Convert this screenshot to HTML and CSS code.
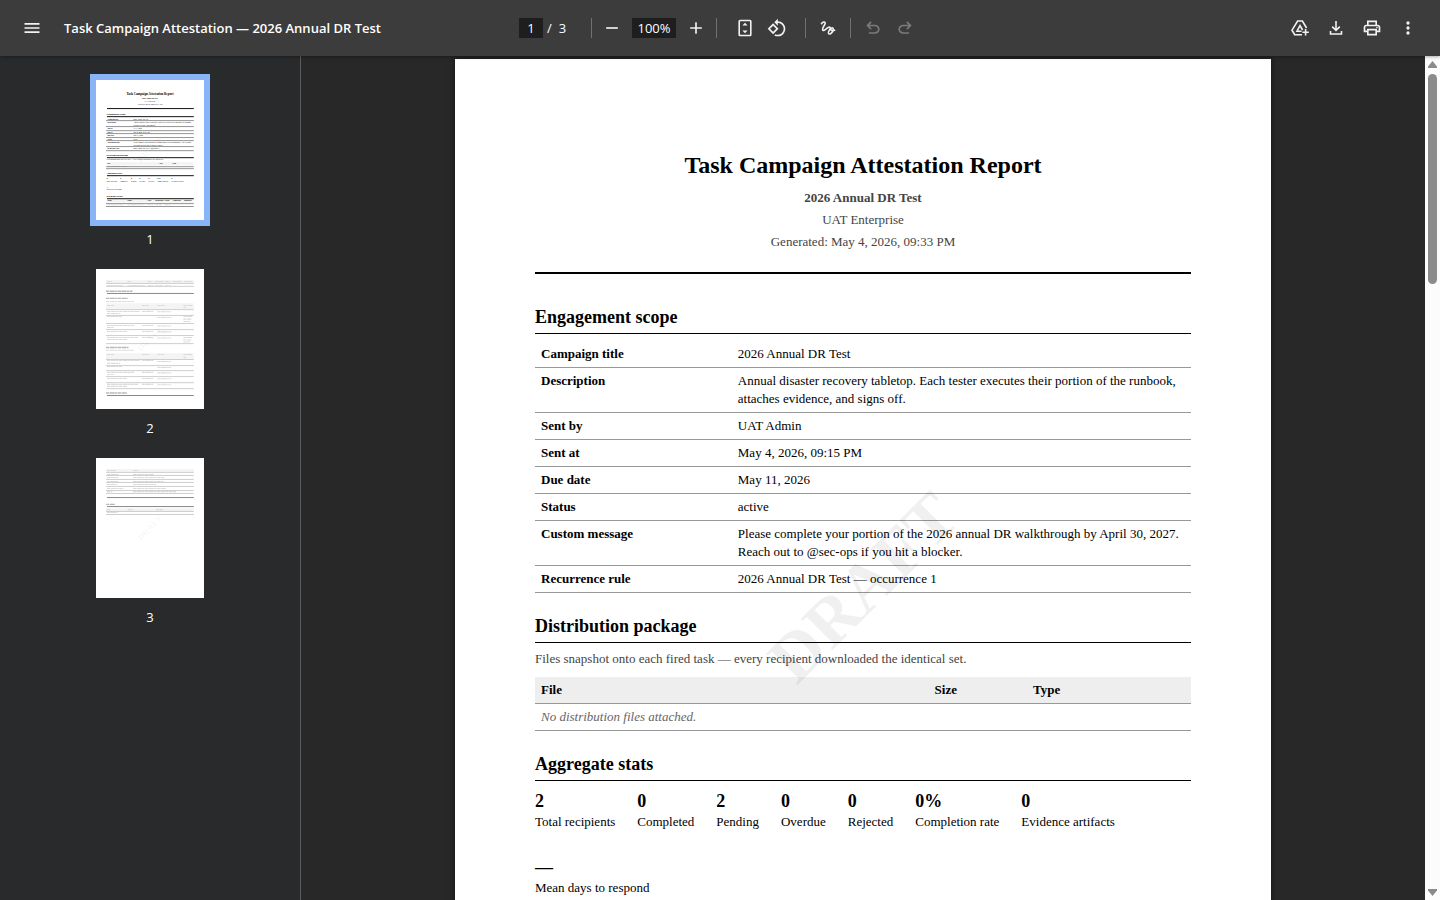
FILE: index.html
```html
<!DOCTYPE html>
<html lang="en">
<head>
    <meta charset="UTF-8">
    <meta name="viewport" content="width=device-width, initial-scale=1.0">
    <title>Task Campaign Attestation — 2026 Annual DR Test</title>
    <link rel="stylesheet" href="styles.css">
</head>
<body>

    <header class="toolbar">
        <div class="toolbar-start">
            <button type="button" class="icon-btn" aria-label="Menu">
                <svg viewBox="0 0 24 24"><path d="M3 18h18v-2H3v2zm0-5h18v-2H3v2zm0-7v2h18V6H3z"/></svg>
            </button>
            <h1 class="file-title">Task Campaign Attestation — 2026 Annual DR Test</h1>
        </div>

        <div class="toolbar-center">
            <input type="text" class="page-input" value="1" aria-label="Page number">
            <span class="page-total"><span>/</span><span>3</span></span>
            <span class="divider"></span>
            <div class="zoom-group">
                <button type="button" class="icon-btn" aria-label="Zoom out">
                    <svg viewBox="0 0 24 24"><path d="M19 13H5v-2h14v2z"/></svg>
                </button>
                <input type="text" class="zoom-input" value="100%" aria-label="Zoom level">
                <button type="button" class="icon-btn" aria-label="Zoom in">
                    <svg viewBox="0 0 24 24"><path d="M19 13h-6v6h-2v-6H5v-2h6V5h2v6h6v2z"/></svg>
                </button>
            </div>
            <span class="divider"></span>
            <div class="view-group">
                <button type="button" class="icon-btn" aria-label="Fit to page">
                    <svg viewBox="0 0 20 20"><path class="line" d="M5 2.5h10a.8.8 0 0 1 .8.8v13.4a.8.8 0 0 1-.8.8H5a.8.8 0 0 1-.8-.8V3.3a.8.8 0 0 1 .8-.8z"/><path d="M10 4.8l2.6 2.8H7.4zM10 15.2l2.6-2.8H7.4z"/></svg>
                </button>
                <button type="button" class="icon-btn" aria-label="Rotate counterclockwise">
                    <svg viewBox="0 0 24 24"><path d="M7.34 6.41L.86 12.9l6.49 6.48 6.49-6.48-6.5-6.49zM3.69 12.9l3.66-3.66L11 12.9l-3.66 3.66-3.65-3.66zm15.67-6.26C17.61 4.88 15.3 4 13 4V.76L8.76 5 13 9.24V6c1.79 0 3.58.68 4.95 2.05 2.73 2.73 2.73 7.17 0 9.9C16.58 19.32 14.79 20 13 20c-.97 0-1.94-.21-2.84-.61l-1.49 1.49C10.02 21.62 11.51 22 13 22c2.3 0 4.61-.88 6.36-2.64 3.52-3.51 3.52-9.21 0-12.72z"/></svg>
                </button>
            </div>
            <span class="divider"></span>
            <div class="edit-group">
                <button type="button" class="icon-btn" aria-label="Draw">
                    <svg viewBox="0 0 20 20"><path class="line" d="M3.2 6.2C4.600 4 7 3.200 7.200 5c.2 1.900-3.500 4.800-2.600 6.800 1.300 2.600 5.200-3.800 7.200-2.600 1.900 1.200-2.600 4.300-1.300 6.300 1.300 1.700 4.700-1.400 4.700-4.300 0-2.200-2.300-1.900-2.300.2 0 1.500 1.800 1.400 4.300.6"/></svg>
                </button>
            </div>
            <span class="divider"></span>
            <div class="edit-group">
                <button type="button" class="icon-btn" aria-label="Undo" disabled>
                    <svg viewBox="0 0 24 24"><path d="M7 19v-2h7.1q1.575 0 2.738-1T18 13.5t-1.162-2.5-2.738-1H7.800l2.600 2.600L9 14 4 9l5-5 1.400 1.400L7.800 8h6.300q2.425 0 4.163 1.575T20 13.500t-1.737 3.925T14.100 19z"/></svg>
                </button>
                <button type="button" class="icon-btn" aria-label="Redo" disabled>
                    <svg viewBox="0 0 24 24"><path d="M17 19v-2H9.900q-1.575 0-2.738-1T6 13.500 7.162 11 9.900 10h6.300l-2.600 2.600L15 14l5-5-5-5-1.400 1.400L16.200 8H9.900Q7.475 8 5.737 9.575T4 13.500t1.737 3.925T9.900 19z"/></svg>
                </button>
            </div>
        </div>

        <div class="toolbar-end">
            <button type="button" class="icon-btn" aria-label="Save to Drive">
                <svg viewBox="0 0 20 20"><path class="line" d="M12 16.700H4.700L2 12.200 7.600 3h4.800l4.200 7"/><path class="line" d="M11.500 13.200H7L10 7.600l2.600 4.400"/><path class="line" d="M15.600 11v6.400M12.400 14.200h6.400"/></svg>
            </button>
            <button type="button" class="icon-btn" aria-label="Download">
                <svg viewBox="0 0 20 20"><path class="line" d="M10 3v9M6.200 8.600L10 12.400l3.800-3.800M4.500 13v3h11v-3"/></svg>
            </button>
            <button type="button" class="icon-btn" aria-label="Print">
                <svg viewBox="0 0 24 24"><path d="M19 8h-1V3H6v5H5c-1.660 0-3 1.340-3 3v6h4v4h12v-4h4v-6c0-1.660-1.340-3-3-3zM8 5h8v3H8V5zm8 12v2H8v-4h8v2zm2-2v-2H6v2H4v-4c0-.55.45-1 1-1h14c.55 0 1 .45 1 1v4h-2z"/><circle cx="18" cy="11.500" r="1"/></svg>
            </button>
            <button type="button" class="icon-btn" aria-label="More actions">
                <svg viewBox="0 0 24 24"><circle cx="12" cy="6" r="2"/><circle cx="12" cy="12" r="2"/><circle cx="12" cy="18" r="2"/></svg>
            </button>
        </div>
    </header>

    <div class="content">
        <nav class="thumbnails" aria-label="Page thumbnails">
            <a href="#page-1" class="thumb selected">
                <svg class="thumb-page" viewBox="0 0 816 1056">
                    <g class="mini-text">
                        <text class="mini-title" x="408" y="114">Task Campaign Attestation Report</text>
                        <text class="mini-center bold" x="408" y="144">2026 Annual DR Test</text>
                        <text class="mini-center" x="408" y="165">UAT Enterprise</text>
                        <text class="mini-center" x="408" y="187">Generated: May 4, 2026, 09:33 PM</text>
                        <text class="mini-head" x="80" y="264">Engagement scope</text>
                        <text class="bold" x="86" y="299">Campaign title</text><text x="283" y="299">2026 Annual DR Test</text>
                        <text class="bold" x="86" y="325">Description</text><text x="283" y="325">Annual disaster recovery tabletop. Each tester executes their portion of the runbook,</text>
                        <text x="283" y="343">attaches evidence, and signs off.</text>
                        <text class="bold" x="86" y="370">Sent by</text><text x="283" y="370">UAT Admin</text>
                        <text class="bold" x="86" y="397">Sent at</text><text x="283" y="397">May 4, 2026, 09:15 PM</text>
                        <text class="bold" x="86" y="423">Due date</text><text x="283" y="423">May 11, 2026</text>
                        <text class="bold" x="86" y="450">Status</text><text x="283" y="450">active</text>
                        <text class="bold" x="86" y="477">Custom message</text><text x="283" y="477">Please complete your portion of the 2026 annual DR walkthrough by April 30, 2027.</text>
                        <text x="283" y="495">Reach out to @sec-ops if you hit a blocker.</text>
                        <text class="bold" x="86" y="521">Recurrence rule</text><text x="283" y="521">2026 Annual DR Test — occurrence 1</text>
                        <text class="mini-head" x="80" y="573">Distribution package</text>
                        <text x="80" y="604">Files snapshot onto each fired task — every recipient downloaded the identical set.</text>
                        <rect class="mini-band" x="80" y="618" width="656" height="26"/>
                        <text class="bold" x="86" y="634">File</text><text class="bold" x="480" y="634">Size</text><text class="bold" x="578" y="634">Type</text>
                        <text x="86" y="660">No distribution files attached.</text>
                        <text class="mini-head" x="80" y="712">Aggregate stats</text>
                        <text class="mini-head" x="80" y="748">2</text><text class="mini-head" x="182" y="748">0</text><text class="mini-head" x="262" y="748">2</text><text class="mini-head" x="327" y="748">0</text><text class="mini-head" x="395" y="748">0</text><text class="mini-head" x="463" y="748">0%</text><text class="mini-head" x="569" y="748">0</text>
                        <text x="80" y="768">Total recipients</text><text x="182" y="768">Completed</text><text x="262" y="768">Pending</text><text x="327" y="768">Overdue</text><text x="395" y="768">Rejected</text><text x="463" y="768">Completion rate</text><text x="569" y="768">Evidence artifacts</text>
                        <text class="mini-head" x="80" y="814">—</text>
                        <text x="80" y="834">Mean days to respond</text>
                        <text class="mini-head" x="80" y="884">Recipient roster</text>
                        <rect class="mini-band" x="80" y="900" width="656" height="26"/>
                        <text class="bold" x="86" y="917">Name</text><text class="bold" x="238" y="917">Email</text><text class="bold" x="390" y="917">Type</text><text class="bold" x="448" y="917">Dispatched</text><text class="bold" x="520" y="917">Status</text><text class="bold" x="580" y="917">Completed</text><text class="bold" x="664" y="917">Submitted</text>
                    </g>
                    <path class="mini-line strong" d="M83 215h656M83 276h656M83 586h656M83 722h656M83 896h656"/>
                    <path class="mini-line" d="M76 306h663M76 351h663M76 382h663M76 404h663M76 434h663M76 457h663M76 502h663M76 533h663M76 654h663M76 669h663M76 933h663M76 955h663"/>
                    <path class="mini-words" d="M86 942h122M238 942h122M390 942h40M448 942h50M520 942h40"/>
                    <text class="mini-draft" transform="translate(408 528) rotate(-45)" y="22">DRAFT</text>
                </svg>
                <span class="thumb-label">1</span>
            </a>
            <a href="#page-2" class="thumb">
                <svg class="thumb-page" viewBox="0 0 816 1056">
                    <path class="mini-band" d="M76 83h663v25H76zM76 257h663v46H76zM76 635h663v46H76z"/>
                    <path class="mini-words" d="M83 94h36M238 94h30M392 94h30M448 94h60M522 94h36M580 94h66M664 94h60M83 125h124M238 125h130M390 125h42M448 125h52M522 125h40M76 245h160M236 245h50M83 275h52M348 275h50M464 275h52M660 275h66M660 290h20M83 320h250M83 335h100M348 320h84M464 322h104M83 358h114M464 366h104M660 358h66M660 378h60M660 396h50M83 426h210M83 441h50M348 426h84M464 430h104M83 472h150M348 472h84M464 474h104M83 517h234M83 532h150M348 517h84M464 520h104M660 517h66M660 536h60M660 550h50M76 613h210M83 645h52M348 645h50M464 645h52M660 645h66M660 668h20M83 690h250M83 712h100M348 690h84M464 698h104M83 736h114M464 744h104M83 780h210M83 796h50M348 780h84M464 784h104M83 826h150M348 826h84M464 828h104M83 871h234M83 886h150M348 871h84M464 874h104"/>
                    <path class="mini-words dark" d="M76 167h200M76 221h164M76 592h170M76 936h160"/>
                    <path class="mini-line soft" d="M76 108h663M76 130h663M76 306h663M76 350h663M76 411h663M76 457h663M76 502h663M76 563h663M76 683h663M76 729h663M76 767h663M76 812h663M76 858h663M76 903h663"/>
                    <path class="mini-line medium" d="M83 184h656M83 955h656"/>
                    <text class="mini-draft" transform="translate(408 528) rotate(-45)" y="22">DRAFT</text>
                </svg>
                <span class="thumb-label">2</span>
            </a>
            <a href="#page-3" class="thumb">
                <svg class="thumb-page" viewBox="0 0 816 1056">
                    <path class="mini-band" d="M76 83h663v25H76zM76 378h663v25H76z"/>
                    <path class="mini-words" d="M83 94h66M280 94h40M83 124h90M280 124h156M83 147h90M280 147h236M83 177h90M280 177h230M83 200h76M280 200h176M83 230h126M280 230h250M83 253h40M280 253h326M83 389h26M238 389h40M454 389h54M83 410h80"/>
                    <path class="mini-words dark" d="M76 350h66"/>
                    <path class="mini-line soft" d="M76 108h663M76 131h663M76 161h663M76 184h663M76 214h663M76 245h663M76 267h663M76 403h663M76 426h663"/>
                    <path class="mini-line medium" d="M83 298h656M83 366h656"/>
                    <text class="mini-draft" transform="translate(408 528) rotate(-45)" y="22">DRAFT</text>
                </svg>
                <span class="thumb-label">3</span>
            </a>
        </nav>

        <main class="viewer">
            <article class="page" id="page-1">
                <header class="report-header">
                    <h1>Task Campaign Attestation Report</h1>
                    <p><strong>2026 Annual DR Test</strong></p>
                    <p>UAT Enterprise</p>
                    <p>Generated: May 4, 2026, 09:33 PM</p>
                </header>

                <section>
                    <h2>Engagement scope</h2>
                    <table class="scope-table">
                        <tr><th scope="row">Campaign title</th><td>2026 Annual DR Test</td></tr>
                        <tr><th scope="row">Description</th><td>Annual disaster recovery tabletop. Each tester executes their portion of the runbook, attaches evidence, and signs off.</td></tr>
                        <tr><th scope="row">Sent by</th><td>UAT Admin</td></tr>
                        <tr><th scope="row">Sent at</th><td>May 4, 2026, 09:15 PM</td></tr>
                        <tr><th scope="row">Due date</th><td>May 11, 2026</td></tr>
                        <tr><th scope="row">Status</th><td>active</td></tr>
                        <tr><th scope="row">Custom message</th><td>Please complete your portion of the 2026 annual DR walkthrough by April 30, 2027. Reach out to @sec-ops if you hit a blocker.</td></tr>
                        <tr><th scope="row">Recurrence rule</th><td>2026 Annual DR Test — occurrence 1</td></tr>
                    </table>
                </section>

                <section>
                    <h2>Distribution package</h2>
                    <p class="note">Files snapshot onto each fired task — every recipient downloaded the identical set.</p>
                    <table class="file-table">
                        <thead>
                            <tr><th class="col-file">File</th><th class="col-size">Size</th><th>Type</th></tr>
                        </thead>
                        <tbody>
                            <tr><td colspan="3" class="empty">No distribution files attached.</td></tr>
                        </tbody>
                    </table>
                </section>

                <section>
                    <h2>Aggregate stats</h2>
                    <div class="stats">
                        <div class="stat"><strong>2</strong><span>Total recipients</span></div>
                        <div class="stat"><strong>0</strong><span>Completed</span></div>
                        <div class="stat"><strong>2</strong><span>Pending</span></div>
                        <div class="stat"><strong>0</strong><span>Overdue</span></div>
                        <div class="stat"><strong>0</strong><span>Rejected</span></div>
                        <div class="stat"><strong>0%</strong><span>Completion rate</span></div>
                        <div class="stat"><strong>0</strong><span>Evidence artifacts</span></div>
                        <div class="stat"><strong>—</strong><span>Mean days to respond</span></div>
                    </div>
                </section>

                <div class="watermark">DRAFT</div>
            </article>
        </main>

        <div class="scrollbar">
            <svg class="arrow" viewBox="0 0 9 7"><path d="M4.500 0L9 5.500V7H0V5.500z"/></svg>
            <div class="track"><div class="scroll-thumb"></div></div>
            <svg class="arrow" viewBox="0 0 9 7"><path d="M4.500 7L9 1.500V0H0v1.500z"/></svg>
        </div>
    </div>

</body>
</html>
```

FILE: styles.css
```css
* {
    box-sizing: border-box;
}

body {
    margin: 0;
    height: 100vh;
    display: flex;
    flex-direction: column;
    overflow: hidden;
    background-color: #282828;
    font-family: "Open Sans", "Noto Sans", sans-serif;
    font-size: 13px;
    color: #ffffff;
}

/* Toolbar */
.toolbar {
    display: flex;
    align-items: center;
    height: 56px;
    flex-shrink: 0;
    padding: 0 16px;
    background-color: #3c3c3c;
    box-shadow: 0 0 4px rgba(0, 0, 0, 0.5);
    position: relative;
    z-index: 1;
}

.toolbar-start,
.toolbar-end {
    display: flex;
    align-items: center;
    flex: 1 1 0;
    min-width: 0;
}

.toolbar-start {
    gap: 16px;
}

.toolbar-end {
    justify-content: flex-end;
    gap: 4px;
}

.file-title {
    margin: 0;
    font-size: 13px;
    font-weight: 600;
    line-height: 20px;
    white-space: nowrap;
}

.toolbar-center,
.zoom-group,
.view-group,
.edit-group {
    display: flex;
    align-items: center;
}

.zoom-group {
    gap: 4px;
    padding: 0 4px;
}

.view-group {
    padding: 0 12px;
}

.edit-group {
    padding: 0 6px;
}

.edit-group:last-child {
    padding-right: 0;
}

.icon-btn {
    width: 32px;
    height: 32px;
    padding: 6px;
    border: none;
    border-radius: 50%;
    background: none;
    color: #f1f1f1;
    cursor: pointer;
}

.icon-btn:hover {
    background-color: rgba(255, 255, 255, 0.08);
}

.icon-btn:disabled {
    color: #7a7a7a;
    background: none;
    cursor: default;
}

.icon-btn svg {
    display: block;
    width: 20px;
    height: 20px;
    fill: currentColor;
}

.icon-btn .line {
    fill: none;
    stroke: currentColor;
    stroke-width: 1.6;
}

.page-input,
.zoom-input {
    height: 20px;
    padding: 0;
    border: none;
    background-color: #1e1e1e;
    color: #ffffff;
    font-family: inherit;
    font-size: 13px;
    line-height: 20px;
    text-align: center;
}

.page-input {
    width: 24px;
}

.zoom-input {
    width: 44px;
}

.page-total {
    display: flex;
    gap: 7px;
    width: 48px;
    padding-left: 4px;
    line-height: 20px;
}

.divider {
    width: 1px;
    height: 20px;
    background-color: #707070;
}

/* Content area */
.content {
    display: flex;
    flex: 1;
    min-height: 0;
}

.thumbnails {
    display: flex;
    flex-direction: column;
    align-items: center;
    gap: 20px;
    width: 301px;
    flex-shrink: 0;
    padding-top: 24px;
    background-color: #292a2b;
    border-right: 1px solid #5c5c5c;
}

.thumb {
    display: flex;
    flex-direction: column;
    align-items: center;
    gap: 9px;
    color: #ffffff;
    text-decoration: none;
}

.thumb-page {
    display: block;
    width: 108px;
    height: 140px;
    background-color: #ffffff;
}

.selected .thumb-page {
    box-shadow: 0 0 0 6px #8ab4f8;
}

.thumb-label {
    line-height: 20px;
}

.mini-text,
.mini-draft {
    font-family: "Liberation Serif", serif;
    font-size: 13px;
    fill: #000000;
}

.mini-title,
.mini-center,
.mini-draft {
    text-anchor: middle;
}

.mini-title,
.mini-head,
.mini-draft,
.bold {
    font-weight: bold;
}

.mini-title {
    font-size: 24px;
}

.mini-head {
    font-size: 18px;
}

.mini-draft {
    font-size: 68px;
    fill: rgba(0, 0, 0, 0.05);
}

.mini-band {
    fill: #f4f4f4;
}

.mini-line {
    stroke: #8c8c8c;
    stroke-width: 7;
}

.mini-line.strong {
    stroke: #000000;
}

.mini-line.medium {
    stroke: #808080;
}

.mini-line.soft {
    stroke: #cacaca;
}

.mini-words {
    stroke: #dadada;
    stroke-width: 8;
    stroke-dasharray: 24 4 38 3 17 4;
}

.mini-words.dark {
    stroke: #b8b8b8;
    stroke-width: 10;
}

/* Document */
.viewer {
    flex: 1;
    min-width: 0;
    padding-top: 3px;
    overflow: hidden;
}

.page {
    position: relative;
    max-width: 816px;
    min-height: 1056px;
    margin: 0 auto;
    padding: 90px 80px 80px;
    background-color: #ffffff;
    box-shadow: 0 0 6px rgba(0, 0, 0, 0.6);
    color: #000000;
    font-family: "Liberation Serif", serif;
    font-size: 13px;
    line-height: 18px;
}

.report-header {
    margin-bottom: 31px;
    padding-bottom: 21px;
    border-bottom: 2px solid #000000;
    text-align: center;
    color: #444444;
}

.report-header h1 {
    margin: 0 0 8px;
    font-size: 24px;
    line-height: 32px;
    color: #000000;
}

.report-header p {
    margin: 0 0 4px;
}

.report-header p:last-child {
    margin-bottom: 0;
}

section {
    margin-bottom: 21px;
}

h2 {
    margin: 0 0 7px;
    padding-bottom: 4px;
    border-bottom: 1px solid #000000;
    font-size: 18px;
    line-height: 24px;
}

table {
    width: 100%;
    border-spacing: 0;
    table-layout: fixed;
}

th,
td {
    padding: 4px 6px;
    border-bottom: 1px solid #999999;
    text-align: left;
    vertical-align: top;
}

.scope-table th {
    width: 30%;
}

.note {
    margin: 0 0 9px;
    color: #444444;
}

.file-table thead th {
    background-color: #eeeeee;
}

.col-file {
    width: 60%;
}

.col-size {
    width: 15%;
}

.empty {
    font-style: italic;
    color: #666666;
}

.stats {
    display: flex;
    flex-wrap: wrap;
    gap: 25px 22px;
    padding-top: 2px;
}

.stat {
    display: flex;
    flex-direction: column;
}

.stat strong {
    font-size: 18px;
    line-height: 23px;
}

.watermark {
    position: absolute;
    top: 50%;
    left: 50%;
    transform: translate(-50%, -50%) rotate(-45deg);
    font-size: 68px;
    font-weight: bold;
    line-height: 80px;
    color: rgba(0, 0, 0, 0.06);
    pointer-events: none;
}

/* Scrollbar */
.scrollbar {
    display: flex;
    flex-direction: column;
    align-items: center;
    gap: 6px;
    width: 15px;
    flex-shrink: 0;
    padding: 5px 0 4px;
    background-color: #fcfcfc;
}

.arrow {
    width: 9px;
    height: 7px;
    fill: #8b8b8b;
}

.track {
    flex: 1;
}

.scroll-thumb {
    width: 9px;
    height: 26%;
    border-radius: 5px;
    background-color: #8b8b8b;
}
```
